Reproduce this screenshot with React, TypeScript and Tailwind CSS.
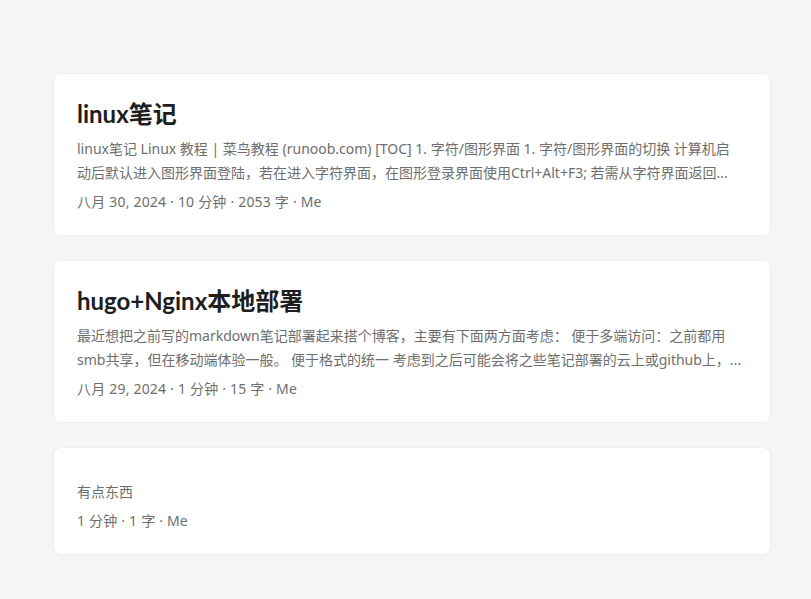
import React from 'react'

type Post = {
  title: string
  summary: string
  meta: string[]
}

const posts: Post[] = [
  {
    title: 'linux笔记',
    summary:
      'linux笔记 Linux 教程 | 菜鸟教程 (runoob.com) [TOC] 1. 字符/图形界面 1. 字符/图形界面的切换 计算机启动后默认进入图形界面登陆，若在进入字符界面，在图形登录界面使用Ctrl+Alt+F3; 若需从字符界面返回...',
    meta: ['八月 30, 2024', '10 分钟', '2053 字', 'Me'],
  },
  {
    title: 'hugo+Nginx本地部署',
    summary:
      '最近想把之前写的markdown笔记部署起来搭个博客，主要有下面两方面考虑： 便于多端访问：之前都用smb共享，但在移动端体验一般。 便于格式的统一 考虑到之后可能会将之些笔记部署的云上或github上，...',
    meta: ['八月 29, 2024', '1 分钟', '15 字', 'Me'],
  },
  {
    title: '',
    summary: '有点东西',
    meta: ['1 分钟', '1 字', 'Me'],
  },
]

//=========Post Entry=========

function PostEntry({ post }: { post: Post }): React.ReactElement {
  return (
    <article className="rounded-lg border border-[#eeeeee] bg-white p-6 pl-[23px]">
      {post.title && (
        <h2 className="font-['Lato','Noto_Sans_CJK_SC',sans-serif] text-[24px] font-bold leading-[31px] text-[#1e1e1e]">
          {post.title}
        </h2>
      )}
      <p className="my-2 max-w-[666px] text-[14px] leading-6 text-[#6e6e6e] [display:-webkit-box] [-webkit-box-orient:vertical] [-webkit-line-clamp:2] overflow-hidden">
        {post.summary}
      </p>
      <footer className="text-[14px] leading-[18px] tracking-[0.2px] text-[#6e6e6e]">
        {post.meta.join(' · ')}
      </footer>
    </article>
  )
}

export default function App(): React.ReactElement {
  return (
    <div
      className="min-h-[599px] bg-[#f5f5f5] pl-[53px] pt-[73px]"
      style={{ fontFamily: '"Noto Sans", "Noto Sans CJK SC", sans-serif' }}
    >
      <main className="flex w-[718px] flex-col gap-6">
        {posts.map((post, i) => (
          <PostEntry key={i} post={post} />
        ))}
      </main>
    </div>
  )
}
